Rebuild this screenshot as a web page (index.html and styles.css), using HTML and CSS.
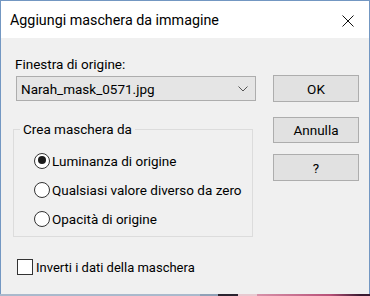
FILE: index.html
```html
<!DOCTYPE html>
<html>
<head>
<meta charset="utf-8">
<link rel="stylesheet" href="styles.css">
</head>
<body>
<div class="window">
  <div class="titlebar">
    <span class="title">Aggiungi maschera da immagine</span>
    <svg class="close" width="12" height="12" viewBox="0 0 12 12"><path d="M0.5 0.5 L11.5 11.5 M11.5 0.5 L0.5 11.5" stroke="#111" stroke-width="1" fill="none"/></svg>
  </div>
  <div class="content">
    <div class="main">
      <div class="left">
        <div class="label">Finestra di origine:</div>
        <div class="select">
          <span>Narah_mask_0571.jpg</span>
          <svg width="10" height="6" viewBox="0 0 10 6"><path d="M0.5 0.5 L5 5 L9.5 0.5" stroke="#555" stroke-width="1" fill="none"/></svg>
        </div>
        <div class="group">
          <div class="legend">Crea maschera da</div>
          <div class="radio"><span class="dot checked"></span><span>Luminanza di origine</span></div>
          <div class="radio"><span class="dot"></span><span>Qualsiasi valore diverso da zero</span></div>
          <div class="radio"><span class="dot"></span><span>Opacità di origine</span></div>
        </div>
      </div>
      <div class="buttons">
        <div class="btn btn-ok">OK</div>
        <div class="btn btn-cancel">Annulla</div>
        <div class="btn btn-help">?</div>
      </div>
    </div>
    <div class="check"><span class="box"></span><span class="check-label">Inverti i dati della maschera</span></div>
  </div>
  <div class="strip"></div>
</div>
</body>
</html>
```

FILE: styles.css
```css
html, body {
  margin: 0;
  padding: 0;
}
body {
  width: 370px;
  height: 296px;
  overflow: hidden;
  font-family: Roboto, "Noto Sans", sans-serif;
  font-size: 13.5px;
  color: #000;
}
.window {
  width: 370px;
  height: 296px;
  box-sizing: border-box;
  display: flex;
  flex-direction: column;
  background: #f0f0f0;
  border-left: 1px solid #7397c2;
  border-right: 1px solid #7397c2;
  border-top: 1px solid #7397c2;
}
.titlebar {
  height: 37px;
  flex: none;
  background: #fff;
  display: flex;
  align-items: center;
  justify-content: space-between;
  padding: 0 15px 0 9px;
}
.title {
  font-size: 14.3px;
  color: #000;
  margin-top: 1px;
}
.close {
  margin-top: 2px;
}
.content {
  flex: 1;
  padding: 17px 0 0 14px;
  display: flex;
  flex-direction: column;
}
.main {
  display: flex;
}
.left {
  width: 241px;
}
.label {
  height: 18px;
  line-height: 18px;
}
.select {
  margin: 3px 0 0 1px;
  width: 240px;
  height: 25px;
  box-sizing: border-box;
  border: 1px solid #adadad;
  background: #e5e5e5;
  display: flex;
  align-items: center;
  justify-content: space-between;
  padding: 0 7px 0 4px;
}
.group {
  margin: 28px 0 0 -2px;
  width: 240px;
  height: 108px;
  box-sizing: border-box;
  border: 1px solid #dcdcdc;
  position: relative;
  padding: 16px 0 0 20px;
}
.legend {
  position: absolute;
  top: -10px;
  left: 6px;
  background: #f0f0f0;
  padding: 0 3px;
  line-height: 18px;
}
.radio {
  display: flex;
  align-items: center;
  height: 29px;
}
.dot {
  width: 16px;
  height: 16px;
  box-sizing: border-box;
  border: 1.5px solid #333;
  border-radius: 50%;
  background: #fff;
  margin-right: 2px;
  position: relative;
}
.dot.checked::after {
  content: "";
  position: absolute;
  left: 2.5px;
  top: 2.5px;
  width: 8px;
  height: 8px;
  border-radius: 50%;
  background: #1a1a1a;
}
.buttons {
  margin: 20px 0 0 17px;
  display: flex;
  flex-direction: column;
}
.btn {
  width: 86px;
  height: 27px;
  box-sizing: border-box;
  border: 1px solid #adadad;
  background: #e1e1e1;
  display: flex;
  align-items: center;
  justify-content: center;
}
.btn-cancel {
  margin-top: 15px;
  height: 26px;
}
.btn-help {
  margin-top: 11px;
}
.check {
  margin-top: 22px;
  margin-left: 2px;
  display: flex;
  align-items: center;
}
.check-label {
  font-size: 13px;
}
.box {
  width: 16px;
  height: 16px;
  box-sizing: border-box;
  border: 1.5px solid #333;
  background: #fff;
  margin-right: 3px;
}
.strip {
  margin-top: auto;
  height: 2px;
  flex: none;
  margin-left: -1px;
  margin-right: -1px;
  background: linear-gradient(to right, #a9b9cc 0, #a9b9cc 200px, #8fa0b6 200px, #8fa0b6 218px, #2a2430 218px, #2a2430 238px, #e8c8d0 238px, #e8c8d0 257px, #d890a8 257px, #c87090 295px, #b85078 330px, #3a1a30 360px);
}
```
